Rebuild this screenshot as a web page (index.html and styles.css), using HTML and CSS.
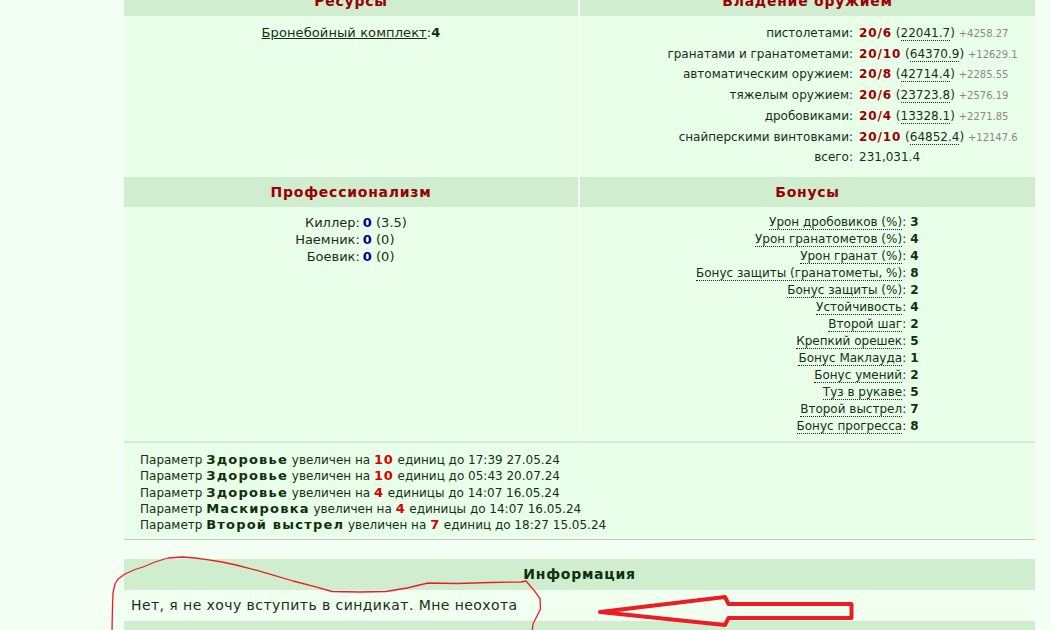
FILE: index.html
```html
<!DOCTYPE html>
<html lang="ru">
<head>
    <meta charset="UTF-8">
    <title>Персонаж</title>
    <link rel="stylesheet" href="styles.css">
</head>
<body>
    <div class="page">
        <div class="sheet">
            <div class="grid2">
                <div class="head">Ресурсы</div>
                <div class="head">Владение оружием</div>

                <div class="cell res">
                    <a href="#" class="link">Бронебойный комплект</a>:<b class="val">4</b>
                </div>
                <div class="cell">
                    <div class="weapons">
                        <span class="lbl">пистолетами:</span>
                        <span><b class="lvl">20/6</b> (<span class="dot">22041.7</span>) <small>+4258.27</small></span>
                        <span class="lbl">гранатами и гранатометами:</span>
                        <span><b class="lvl">20/10</b> (<span class="dot">64370.9</span>) <small>+12629.1</small></span>
                        <span class="lbl">автоматическим оружием:</span>
                        <span><b class="lvl">20/8</b> (<span class="dot">42714.4</span>) <small>+2285.55</small></span>
                        <span class="lbl">тяжелым оружием:</span>
                        <span><b class="lvl">20/6</b> (<span class="dot">23723.8</span>) <small>+2576.19</small></span>
                        <span class="lbl">дробовиками:</span>
                        <span><b class="lvl">20/4</b> (<span class="dot">13328.1</span>) <small>+2271.85</small></span>
                        <span class="lbl">снайперскими винтовками:</span>
                        <span><b class="lvl">20/10</b> (<span class="dot">64852.4</span>) <small>+12147.6</small></span>
                        <span class="lbl">всего:</span>
                        <span>231,031.4</span>
                    </div>
                </div>

                <div class="head">Профессионализм</div>
                <div class="head">Бонусы</div>

                <div class="cell">
                    <div class="pairs prof">
                        <span class="lbl">Киллер:</span><span><b class="blue">0</b> (3.5)</span>
                        <span class="lbl">Наемник:</span><span><b class="blue">0</b> (0)</span>
                        <span class="lbl">Боевик:</span><span><b class="blue">0</b> (0)</span>
                    </div>
                </div>
                <div class="cell">
                    <div class="pairs bonus">
                        <span class="lbl"><span class="dot">Урон дробовиков (%)</span>:</span><b class="val">3</b>
                        <span class="lbl"><span class="dot">Урон гранатометов (%)</span>:</span><b class="val">4</b>
                        <span class="lbl"><span class="dot">Урон гранат (%)</span>:</span><b class="val">4</b>
                        <span class="lbl"><span class="dot">Бонус защиты (гранатометы, %)</span>:</span><b class="val">8</b>
                        <span class="lbl"><span class="dot">Бонус защиты (%)</span>:</span><b class="val">2</b>
                        <span class="lbl"><span class="dot">Устойчивость</span>:</span><b class="val">4</b>
                        <span class="lbl"><span class="dot">Второй шаг</span>:</span><b class="val">2</b>
                        <span class="lbl"><span class="dot">Крепкий орешек</span>:</span><b class="val">5</b>
                        <span class="lbl"><span class="dot">Бонус Маклауда</span>:</span><b class="val">1</b>
                        <span class="lbl"><span class="dot">Бонус умений</span>:</span><b class="val">2</b>
                        <span class="lbl"><span class="dot">Туз в рукаве</span>:</span><b class="val">5</b>
                        <span class="lbl"><span class="dot">Второй выстрел</span>:</span><b class="val">7</b>
                        <span class="lbl"><span class="dot">Бонус прогресса</span>:</span><b class="val">8</b>
                    </div>
                </div>
            </div>

            <div class="params">
                <div>Параметр <b>Здоровье</b> увеличен на <b class="red">10</b> единиц до 17:39 27.05.24</div>
                <div>Параметр <b>Здоровье</b> увеличен на <b class="red">10</b> единиц до 05:43 20.07.24</div>
                <div>Параметр <b>Здоровье</b> увеличен на <b class="red">4</b> единицы до 14:07 16.05.24</div>
                <div>Параметр <b>Маскировка</b> увеличен на <b class="red">4</b> единицы до 14:07 16.05.24</div>
                <div>Параметр <b>Второй выстрел</b> увеличен на <b class="red">7</b> единиц до 18:27 15.05.24</div>
            </div>
        </div>

        <div class="sheet info">
            <div class="head head-green">Информация</div>
            <div class="info-body">Нет, я не хочу вступить в синдикат. Мне неохота</div>
            <div class="info-foot"></div>
        </div>

        <!-- red marker scribbles over the page -->
        <svg class="scribble" width="1051" height="630" viewBox="0 0 1051 630">
            <path d="M112 632 L112.5 606 L113 593 L115 584 L118 579 L125 574 L135 569.5 L143 567 L155 562 L168 558 L182 557 L195 558 L207 559.6 L222 562 L236 565 L257 570.4 L275 575.7 L293 581 L314 586.4 L332 591.5 L360 592 L386 591.5 L407 588 L428 583 L457 583.5 L490 582.5 L521 582 L526 581 L529 584.5 L535 591.6 L540 598.6 L540.5 609 L537 616 L533 624 L532 632"
                  fill="none" stroke="#ed1c24" stroke-width="1.3" stroke-linejoin="round"/>
            <path d="M600 612 L725 597 L728.5 604 L851.5 604 L851.5 618 L728.5 618 L725 625 Z"
                  fill="none" stroke="#ed1c24" stroke-width="4" stroke-linejoin="round"/>
        </svg>
    </div>
</body>
</html>
```

FILE: styles.css
```css
/* Base */
* {
    margin: 0;
    padding: 0;
    box-sizing: border-box;
}

body {
    font-family: "DejaVu Sans", Verdana, sans-serif;
    font-size: 12px;
    background: #f4fff4;
    color: #143014;
    overflow: hidden;
}

.page {
    position: relative;
    display: flow-root;
    width: 1051px;
    height: 630px;
    padding-left: 124px;
}

.sheet {
    width: 911px;
}

.sheet:first-child {
    margin-top: -14px;
}

/* Two column tables */
.grid2 {
    display: grid;
    grid-template-columns: 454px 455px;
    column-gap: 2px;
}

.head {
    background: #d0edd0;
    height: 30px;
    line-height: 30px;
    text-align: center;
    font-size: 14px;
    font-weight: bold;
    letter-spacing: 0.75px;
    color: #990000;
}

.head-green {
    color: #0d300d;
    height: 31px;
    line-height: 31px;
}

.cell {
    background: #e9ffe9;
    padding: 7px 10px 6px;
}

.grid2 > .cell:nth-child(3),
.grid2 > .cell:nth-child(4) {
    height: 161px;
}

.grid2 > .cell:nth-child(7),
.grid2 > .cell:nth-child(8) {
    height: 234px;
}

.res {
    text-align: center;
    line-height: 19px;
    font-size: 13px;
    letter-spacing: 0.1px;
}

.link {
    color: #143014;
    text-decoration: underline;
}

.val {
    color: #0d300d;
}

.lvl {
    color: #990000;
    letter-spacing: 0.9px;
}

.blue {
    color: #000088;
}

.red {
    color: #dd0000;
}

.dot {
    border-bottom: 1px dotted #143014;
}

small {
    font-size: 10px;
    line-height: 1;
    letter-spacing: 0;
    color: #888888;
}

/* Weapon skills list */
.weapons {
    display: grid;
    grid-template-columns: 1fr 176px;
    column-gap: 6px;
    line-height: 20.7px;
    margin-right: -10px;
}

.weapons .lbl {
    text-align: right;
}

/* Centered label/value pairs */
.pairs {
    display: grid;
    grid-template-columns: auto auto;
    justify-content: center;
    column-gap: 4px;
    line-height: 17px;
}

.pairs .lbl {
    text-align: right;
}

.prof {
    font-size: 13px;
    column-gap: 3px;
}

.bonus .val {
    letter-spacing: 0.5px;
}

/* Parameter notes */
.params {
    background: #e9ffe9;
    border-top: 2px solid #d3ebd3;
    border-bottom: 1px solid #b9cdb9;
    padding: 9px 16px 5px;
    line-height: 16.25px;
    height: 99px;
}

.params b {
    color: #0d300d;
    font-size: 13px;
    line-height: 1;
    letter-spacing: 1.2px;
}

.params b.red {
    color: #dd0000;
    letter-spacing: 0.8px;
}

/* Information block */
.info {
    margin-top: 19px;
}

.info-body {
    background: #f0fff0;
    height: 31px;
    line-height: 30px;
    padding-left: 7px;
    font-size: 14px;
    letter-spacing: 0.43px;
}

.info-foot {
    background: #d0edd0;
    height: 10px;
}

.scribble {
    position: absolute;
    left: 0;
    top: 0;
    pointer-events: none;
}
```
